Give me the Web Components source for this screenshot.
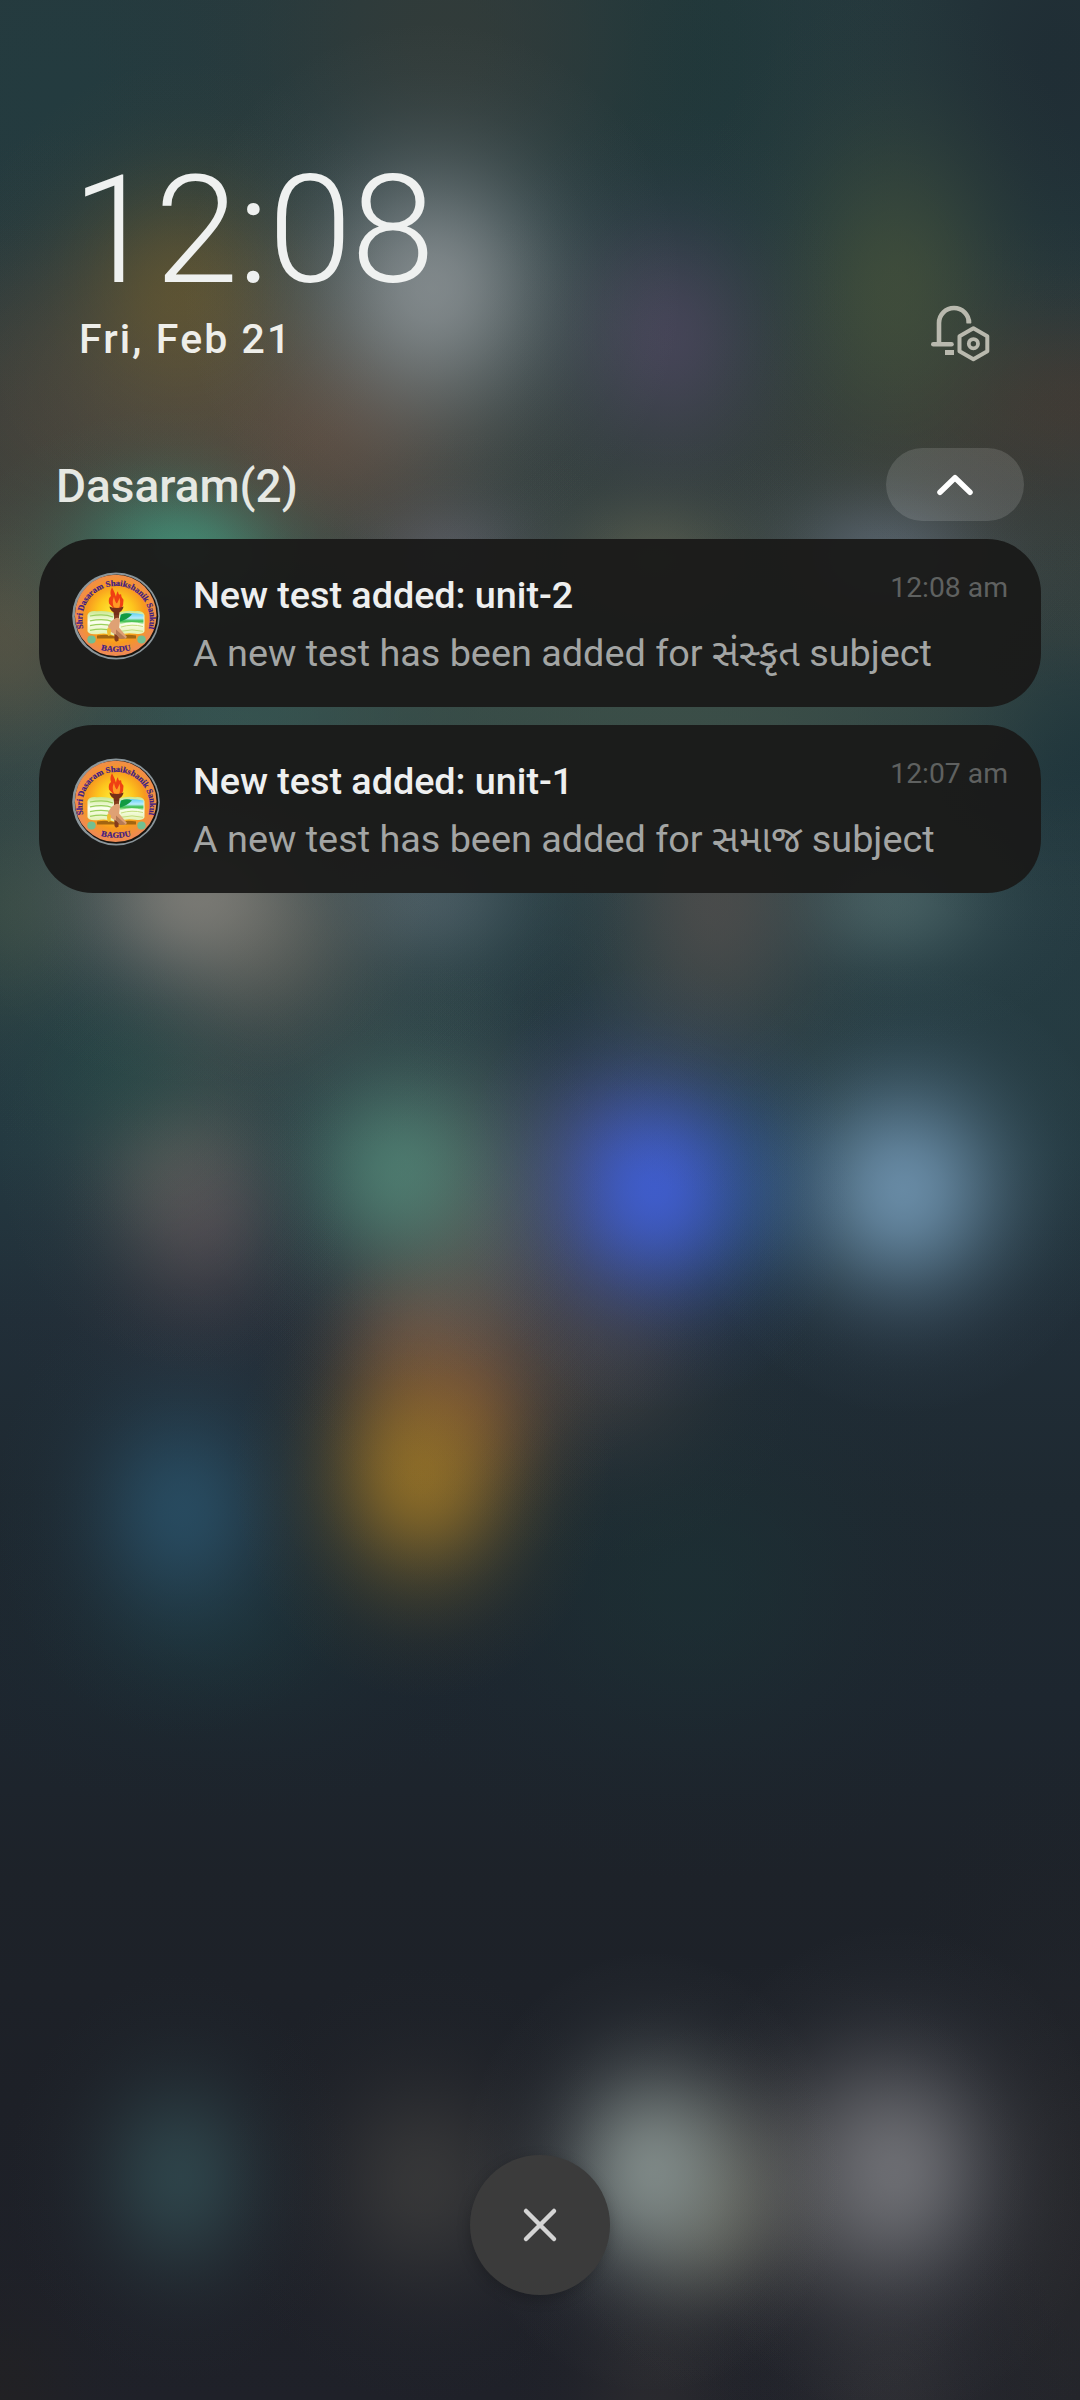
<!DOCTYPE html>
<html lang="en">
<head>
<meta charset="utf-8">
<title>Lock screen</title>
<style>
html,body{margin:0;padding:0;background:#1f252c}
body{width:1080px;height:2400px;overflow:hidden}
</style>
</head>
<body>
<lock-screen>
  <lock-clock time="12:08" date="Fri, Feb 21"></lock-clock>
  <notification-group label="Dasaram(2)">
    <notification-card time="12:08 am">
      <span slot="title">New test added: unit-2</span>
      <span slot="body">A new test has been added for સંસ્કૃત subject</span>
    </notification-card>
    <notification-card time="12:07 am">
      <span slot="title">New test added: unit-1</span>
      <span slot="body">A new test has been added for સમાજ subject</span>
    </notification-card>
  </notification-group>
  <dismiss-button slot="footer"></dismiss-button>
</lock-screen>

<script>
const define = (name, html, setup) => customElements.define(name, class extends HTMLElement {
  connectedCallback() {
    if (this.shadowRoot) return;
    const root = this.attachShadow({ mode: 'open' });
    root.innerHTML = html;
    if (setup) setup.call(this, root);
  }
});

/* Blurred wallpaper: soft spots as [x, y, rx, ry, rgb, alpha], the first lies on top. */
const SPOTS = [
  [432,288,132,140,'148,154,157',.8],
  [182,290,115,120,'110,92,46',.65],
  [668,335,98,120,'80,72,98',.68],
  [895,290,110,160,'72,84,58',.68],
  [1075,400,170,95,'70,58,50',.65],
  [330,440,135,110,'98,76,62',.65],
  [185,550,115,75,'66,142,118',.9],
  [445,555,95,65,'92,96,106',.72],
  [655,560,95,65,'90,95,80',.72],
  [885,555,105,70,'92,104,116',.78],
  [180,400,230,150,'90,80,66',.6],
  [5,640,110,120,'92,88,70',.72],
  [30,430,150,160,'66,60,52',.5],
  [960,480,180,120,'58,58,54',.55],
  [650,715,400,80,'60,80,72',.8],
  [250,715,200,70,'52,86,84',.8],
  [1075,745,120,110,'28,50,58',.9],
  [195,895,125,100,'138,134,127',.78],
  [265,950,120,125,'106,99,88',.48],
  [425,895,110,80,'80,98,106',.75],
  [715,905,110,155,'86,80,77',.7],
  [890,900,110,75,'80,106,108',.7],
  [130,1070,110,90,'38,76,72',.5],
  [10,910,90,120,'62,80,70',.7],
  [205,1215,75,85,'98,82,90',.38],
  [180,1165,95,105,'98,102,94',.65],
  [400,1172,108,112,'84,138,122',.75],
  [655,1188,104,118,'64,94,210',.93],
  [903,1190,112,118,'110,146,174',.9],
  [745,1185,85,110,'36,80,116',.5],
  [590,1170,110,130,'74,76,108',.55],
  [480,1240,115,150,'100,92,84',.6],
  [422,1475,100,118,'152,116,38',.85],
  [450,1410,92,90,'146,82,46',.6],
  [430,1325,95,90,'110,80,70',.7],
  [600,1345,110,115,'72,68,67',.65],
  [183,1510,100,120,'42,82,106',.8],
  [200,1280,110,100,'60,56,66',.45],
  [690,1580,180,160,'28,52,54',.5],
  [220,1630,160,100,'28,54,58',.5],
  [652,2172,100,116,'132,143,141',.9],
  [705,2205,75,95,'122,120,100',.45],
  [895,2172,112,130,'112,113,118',.93],
  [180,2178,90,108,'48,72,78',.85],
  [425,2185,105,115,'60,60,60',.8],
  [780,2190,130,120,'78,78,78',.65],
  [655,2400,80,110,'48,47,50',.6],
  [890,2400,100,120,'52,52,56',.6],
  [1070,2250,110,280,'44,44,46',.55],
  [0,2400,80,100,'34,33,34',.7],
  [560,1050,80,170,'30,50,58',.65],
  [470,1000,280,170,'50,72,74',.5],
  [900,1040,300,180,'38,60,66',.55],
  [450,40,190,180,'54,60,56',.7],
  [690,60,130,190,'28,54,56',.6],
  [1060,60,160,240,'30,42,50',.75],
  [60,90,180,180,'34,60,64',.5]
];
const falloff = (c, a) => {
  const stops = [];
  for (let i = 0; i <= 16; i++) {
    const v = i === 16 ? 0 : a * Math.exp(-1.3 * Math.pow(i / 16 * 1.9, 2));
    stops.push(`rgba(${c},${v.toFixed(4)}) ${(i / 16 * 100).toFixed(1)}%`);
  }
  return stops.join(',');
};

define('blurred-wallpaper', `
<style>:host{display:block;position:absolute;inset:0}</style>`, function () {
  this.style.background = SPOTS.map(([x, y, rx, ry, c, a]) =>
    `radial-gradient(${rx * 1.9}px ${ry * 1.9}px at ${x}px ${y}px,${falloff(c, a)})`).join(',') +
    ',linear-gradient(#263a3e 0,#253a3e 220px,#323e3e 430px,#374341 640px,#2d4245 760px,#253b42 950px,#243941 1150px,#212e38 1320px,#1e2931 1500px,#1d262f 1700px,#1d2229 1880px,#1d2027 2100px,#1f2129 2400px)';
});

define('lock-screen', `
<style>
:host{display:block;position:relative;width:1080px;height:2400px;overflow:hidden;font-family:Roboto,"Noto Sans Gujarati","Noto Sans",sans-serif}
.page{position:relative;box-sizing:border-box;height:100%;display:flex;flex-direction:column;padding:142px 39px 105px}
.foot{margin-top:auto;display:flex;justify-content:center}
</style>
<blurred-wallpaper></blurred-wallpaper>
<div class="page"><slot></slot><div class="foot"><slot name="footer"></slot></div></div>`);

define('lock-clock', `
<style>
:host{display:flex;justify-content:space-between;align-items:flex-end;padding:0 51px 0 40px;height:236px;box-sizing:border-box}
.time{font-size:151px;font-weight:300;line-height:177px;color:#eff1f0;letter-spacing:-1px;margin-left:-7px;white-space:nowrap}
.date{font-size:41px;font-weight:500;line-height:48px;letter-spacing:2.1px;margin-top:-4px;color:#eeeeea;white-space:nowrap}
.col{display:flex;flex-direction:column;height:100%}
svg{display:block;margin-bottom:15px}
</style>
<div class="col"><div class="time"></div><div class="date"></div></div>
<svg width="60" height="58" viewBox="930 305 60 58" fill="none" stroke="#b9b9ae" stroke-width="4.6">
  <path d="M939 343V323a15 15 0 0 1 30 0"/>
  <path d="M968.8 319.500V323.500"/>
  <path d="M933.300 344.300H951.500" stroke-linecap="round"/>
  <path d="M945 352.500H954" stroke-width="5"/>
  <path d="M973.400 328.300L987.300 336.200V351.300L973.400 359.200L959.500 351.300V336.200Z" stroke-linejoin="round" stroke-width="4"/>
  <circle cx="973.400" cy="343.700" r="4.600" stroke-width="3.800"/>
</svg>`, function (r) {
  r.querySelector('.time').textContent = this.getAttribute('time');
  r.querySelector('.date').textContent = this.getAttribute('date');
});

define('notification-group', `
<style>
:host{display:block;padding-top:70px}
header{display:flex;justify-content:space-between;align-items:center;height:73px;padding:0 17px;margin-bottom:18px}
.label{font-size:46px;line-height:54px;font-weight:500;color:#e6e8e3;position:relative;top:1px;white-space:nowrap}
.pill{width:138px;height:73px;border-radius:36.500px;background:rgba(255,255,255,.13);display:flex;align-items:center;justify-content:center}
.list{display:flex;flex-direction:column;gap:18px}
</style>
<header><div class="label"></div><div class="pill"><svg width="40" height="28" viewBox="0 0 40 28" fill="none" stroke="#fff" stroke-width="5.500" stroke-linecap="round" stroke-linejoin="round"><path d="M5 21.300L20 6.700L35 21.300"/></svg></div></header>
<div class="list"><slot></slot></div>`, function (r) {
  r.querySelector('.label').textContent = this.getAttribute('label');
});

define('notification-card', `
<style>
:host{display:flex;box-sizing:border-box;height:168px;border-radius:54px;background:rgba(26,26,25,.955);padding:0 33px}
school-badge{margin:33px 33px 0 0}
.text{flex:1;display:flex;flex-direction:column;padding-top:34px}
.row{display:flex;justify-content:space-between;align-items:flex-start;height:44px}
.title{font-size:37.800px;line-height:44px;font-weight:500;letter-spacing:-.05px;color:#eeefef;white-space:nowrap}
.body{font-size:37.800px;line-height:44px;margin-top:14px;height:44px;color:#a3a5a4;white-space:nowrap}
.time{font-size:28.300px;line-height:34px;margin-top:-2px;color:#5f6160;white-space:nowrap}
</style>
<school-badge></school-badge>
<div class="text">
  <div class="row"><div class="title"><slot name="title"></slot></div><div class="time"></div></div>
  <div class="body"><slot name="body"></slot></div>
</div>`, function (r) {
  r.querySelector('.time').textContent = this.getAttribute('time');
});

define('school-badge', `
<style>:host{display:block;width:88px;height:88px;flex:none}svg{display:block;overflow:visible}text{font-family:"Liberation Serif",serif;font-weight:700;fill:#3c1a86;stroke:#3c1a86;stroke-width:.2}</style>
<svg width="88" height="88" viewBox="0 0 88 92" preserveAspectRatio="none">
  <defs>
    <radialGradient id="g" cx=".5" cy=".48" r=".5"><stop offset="0" stop-color="#fff23a"/><stop offset=".45" stop-color="#fdc51d"/><stop offset=".72" stop-color="#f7991f"/><stop offset="1" stop-color="#ef8a52"/></radialGradient>
    <linearGradient id="p" x1="0" y1="0" x2="0" y2="1"><stop offset="0" stop-color="#c9e78c"/><stop offset=".45" stop-color="#fbfff0"/><stop offset="1" stop-color="#e0f0a8"/></linearGradient>
    <linearGradient id="q" x1="0" y1="0" x2="0" y2="1"><stop offset="0" stop-color="#5fd0f0"/><stop offset=".45" stop-color="#b8ecff"/><stop offset=".7" stop-color="#36bd45"/><stop offset="1" stop-color="#f4ffd8"/></linearGradient>
    <path id="arc" d="M13.500 65A33.800 35.300 0 1 1 74.500 65"/>
    <path id="low" d="M22 79Q44 88 66 79"/>
  </defs>
  <ellipse cx="44" cy="46" rx="43.800" ry="45.500" fill="#8b969b"/>
  <ellipse cx="44.500" cy="46.200" rx="41.700" ry="43.500" fill="#17130f"/>
  <ellipse cx="43.700" cy="45.300" rx="40.800" ry="42.500" fill="url(#g)"/>
  <path d="M15.500 45Q17 40 25 41Q36 40 44 44Q53 39 63 41Q71 40 72.500 45V62Q71 66 63 64.500Q52 63 44 67Q35 63 25 65Q17 66 15.500 62Z" fill="url(#p)"/>
  <path d="M18 46Q32 43 41 47M18 51Q32 48 41 52M18 56Q32 53 41 57M18 61Q32 58 41 62" fill="none" stroke="#9bd05c" stroke-width="1.300"/>
  <path d="M48 45Q58 41 71.500 44.500V55Q60 50 48 55Z" fill="url(#q)"/>
  <path d="M49 44.500Q55 42 60 44.500Q54 51 47 52Z" fill="#119b42"/>
  <path d="M49 57.500Q60 54 71 57M49 62Q60 59 71 62" fill="none" stroke="#c2dc79" stroke-width="1"/>
  <path d="M25 66.500Q36 64 44 68Q54 64 64 66.500V69.500H25Z" fill="#a26511"/>
  <path d="M43 40L37 33Q36 27 39 25Q37.500 21 40 16Q43 22 44 26Q44.500 21 46 20Q46.500 25 49 23Q49 27 51.500 29Q52 34 49 39Z" fill="#ef4013"/>
  <path d="M42 37Q39.500 32 42 26Q43 32 45 33Q47 29 47.500 27Q49 33 47 38Z" fill="#ff9a25"/>
  <path d="M37.500 36Q44 39.500 51.500 36Q51 40 47.500 42L47 46H42L41.500 42Q38 40 37.500 36Z" fill="#772f17"/>
  <path d="M42 45H47L46.500 72L44 73L42.500 71Z" fill="#843b1d"/>
  <path d="M44 48Q48 47 48 51L47 58L55 68L53 70L41 64Q37 62 36 57Q38 52 41 50Z" fill="#dfa174"/>
  <path d="M44 60L54 69.500L48 70L44 65Z" fill="#b67a56"/>
  <path d="M36 58Q34 61 36 67L38.500 66L39 60Z" fill="#efbc2f"/>
  <circle cx="19.500" cy="70.500" r="4.200" fill="#73bf91"/><circle cx="69.500" cy="70.500" r="4.200" fill="#73bf91"/>
  <text font-size="8.700" letter-spacing="-.05"><textPath href="#arc" startOffset="50%" text-anchor="middle">Shri Dasaram Shaikshanik Sankul</textPath></text>
  <text font-size="8.500"><textPath href="#low" startOffset="50%" text-anchor="middle">BAGDU</textPath></text>
</svg>`);

define('dismiss-button', `
<style>:host{display:flex;align-items:center;justify-content:center;width:140px;height:140px;border-radius:50%;background:#3b3b3b;box-shadow:0 4px 14px rgba(0,0,0,.22)}</style>
<svg width="40" height="40" viewBox="0 0 40 40" fill="none" stroke="#d4d4d4" stroke-width="4.500" stroke-linecap="round"><path d="M6 6L34 34M34 6L6 34"/></svg>`);
</script>
</body>
</html>
